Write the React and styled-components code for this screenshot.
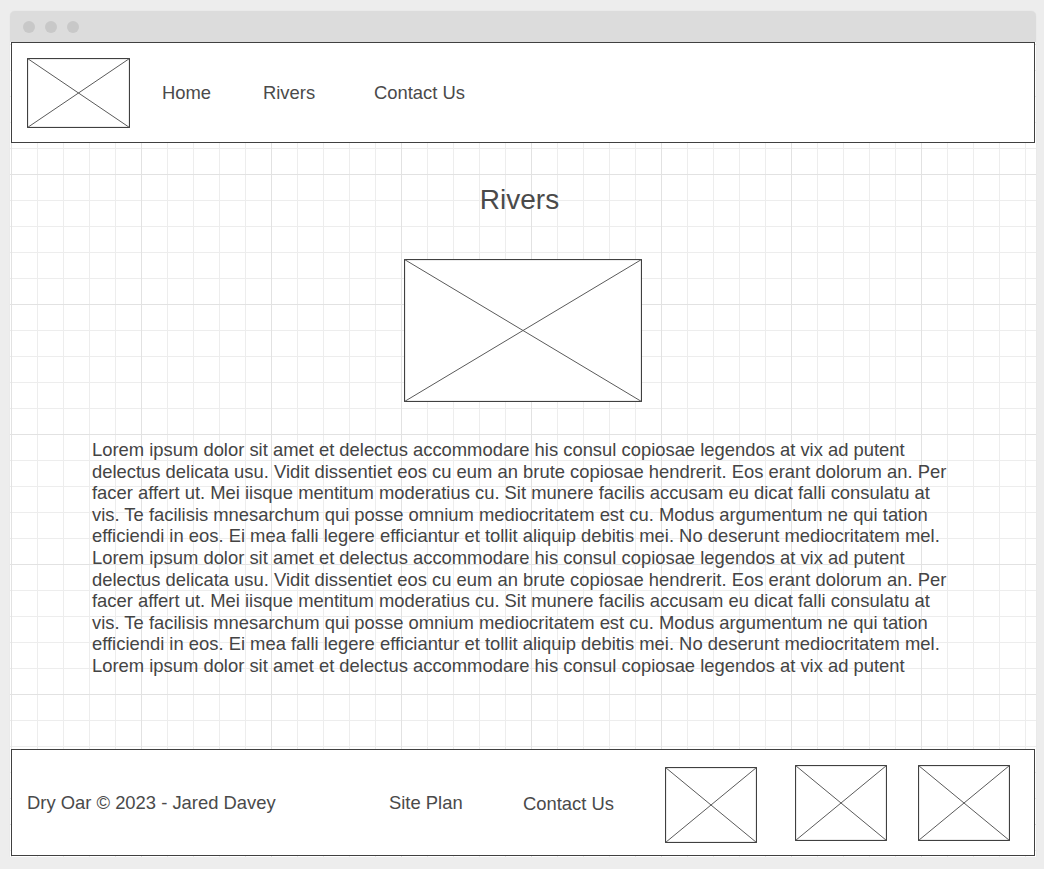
import React from 'react';
import styled, { createGlobalStyle } from 'styled-components';

const GlobalStyle = createGlobalStyle`
  html, body {
    margin: 0;
    padding: 0;
    background: #ededed;
    font-family: "Liberation Sans", Arial, sans-serif;
    color: #444;
  }
`;

const Page = styled.div`
  padding: 11px 0 0 10px;
`;

const Window = styled.div`
  width: 1026px;
  height: 846px;
  display: flex;
  flex-direction: column;
  box-shadow: 0 0 1px rgba(0, 0, 0, 0.12);
  border-radius: 5px 5px 0 0;
`;

const TitleBar = styled.div`
  height: 31px;
  background: #dcdcdc;
  border-radius: 5px 5px 0 0;
  display: flex;
  align-items: center;
  gap: 10px;
  padding-left: 13px;
`;

const Dot = styled.span`
  width: 12px;
  height: 12px;
  border-radius: 50%;
  background: #c8c8c8;
`;

/* canvas com grade fina (26px) e grossa (130px) */
const Canvas = styled.div`
  flex: 1;
  display: flex;
  flex-direction: column;
  padding: 0 1px;
  background-color: #fff;
  background-image:
    linear-gradient(to right, #e2e2e2 1px, transparent 1px),
    linear-gradient(to bottom, #e2e2e2 1px, transparent 1px),
    linear-gradient(to right, #ededed 1px, transparent 1px),
    linear-gradient(to bottom, #ededed 1px, transparent 1px);
  background-size: 130px 130px, 130px 130px, 26px 26px, 26px 26px;
  background-position: 1px 2px;
`;

const Header = styled.header`
  box-sizing: border-box;
  height: 101px;
  border: 1px solid #404040;
  background: #fff;
  display: grid;
  grid-template-columns: 135px 101px 111px auto;
  align-items: center;
  padding-left: 15px;
`;

const NavLink = styled.a`
  font-size: 18.4px;
  color: #4a4a4a;
  text-decoration: none;
  margin-top: ${(p) => p.$dy || 0}px;
`;

const Main = styled.main`
  flex: 1;
  display: flex;
  flex-direction: column;
  align-items: center;
`;

const Title = styled.h1`
  margin: 41px 7px 0 0;
  font-size: 28px;
  line-height: 32px;
  font-weight: normal;
  color: #4a4a4a;
`;

const Hero = styled.div`
  margin-top: 43px;
  background: #fff;
  line-height: 0;
`;

const Paragraph = styled.div`
  align-self: flex-start;
  margin: 37px 0 0 81px;
  font-size: 18.4px;
  line-height: 21.6px;
  color: #444;
`;

const Line = styled.span`
  display: block;
  white-space: nowrap;
`;

const Footer = styled.footer`
  box-sizing: border-box;
  height: 107px;
  margin-bottom: 1px;
  border: 1px solid #404040;
  background: #fff;
  display: grid;
  grid-template-columns: 362px 134px 142px 130px 123px 92px;
  align-items: center;
  padding-left: 15px;
`;

const FooterText = styled.span`
  font-size: 18.4px;
  color: #4a4a4a;
  margin-top: ${(p) => p.$dy || 0}px;
`;

const Thumb = styled.div`
  line-height: 0;
  margin-top: ${(p) => p.$dy || 0}px;
`;

function Placeholder({ w, h }) {
  return (
    <svg width={w} height={h} viewBox={`0 0 ${w} ${h}`}>
      <rect x="0.5" y="0.5" width={w - 1} height={h - 1} fill="#fff" stroke="#404040" strokeWidth="1.2" />
      <line x1="0.5" y1="0.5" x2={w - 0.5} y2={h - 0.5} stroke="#5a5a5a" strokeWidth="1" />
      <line x1={w - 0.5} y1="0.5" x2="0.5" y2={h - 0.5} stroke="#5a5a5a" strokeWidth="1" />
    </svg>
  );
}

const block =
  'Lorem ipsum dolor sit amet et delectus accommodare his consul copiosae legendos at vix ad putent|' +
  'delectus delicata usu. Vidit dissentiet eos cu eum an brute copiosae hendrerit. Eos erant dolorum an. Per|' +
  'facer affert ut. Mei iisque mentitum moderatius cu. Sit munere facilis accusam eu dicat falli consulatu at|' +
  'vis. Te facilisis mnesarchum qui posse omnium mediocritatem est cu. Modus argumentum ne qui tation|' +
  'efficiendi in eos. Ei mea falli legere efficiantur et tollit aliquip debitis mei. No deserunt mediocritatem mel.';

const lines = [...block.split('|'), ...block.split('|'), block.split('|')[0]];

export default function App() {
  return (
    <Page>
      <GlobalStyle />
      <Window>
        <TitleBar>
          <Dot />
          <Dot />
          <Dot />
        </TitleBar>
        <Canvas>
          <Header>
            <Thumb $dy={1}>
              <Placeholder w={103} h={70} />
            </Thumb>
            <NavLink href="#" $dy={1}>Home</NavLink>
            <NavLink href="#">Rivers</NavLink>
            <NavLink href="#">Contact Us</NavLink>
          </Header>
          <Main>
            <Title>Rivers</Title>
            <Hero>
              <Placeholder w={238} h={143} />
            </Hero>
            <Paragraph>
              {lines.map((l, i) => (
                <Line key={i}>{l}</Line>
              ))}
            </Paragraph>
          </Main>
          <Footer>
            <FooterText>Dry Oar © 2023 - Jared Davey</FooterText>
            <FooterText>Site Plan</FooterText>
            <FooterText $dy={2}>Contact Us</FooterText>
            <Thumb $dy={5}>
              <Placeholder w={92} h={76} />
            </Thumb>
            <Thumb $dy={1}>
              <Placeholder w={92} h={76} />
            </Thumb>
            <Thumb $dy={1}>
              <Placeholder w={92} h={76} />
            </Thumb>
          </Footer>
        </Canvas>
      </Window>
    </Page>
  );
}
